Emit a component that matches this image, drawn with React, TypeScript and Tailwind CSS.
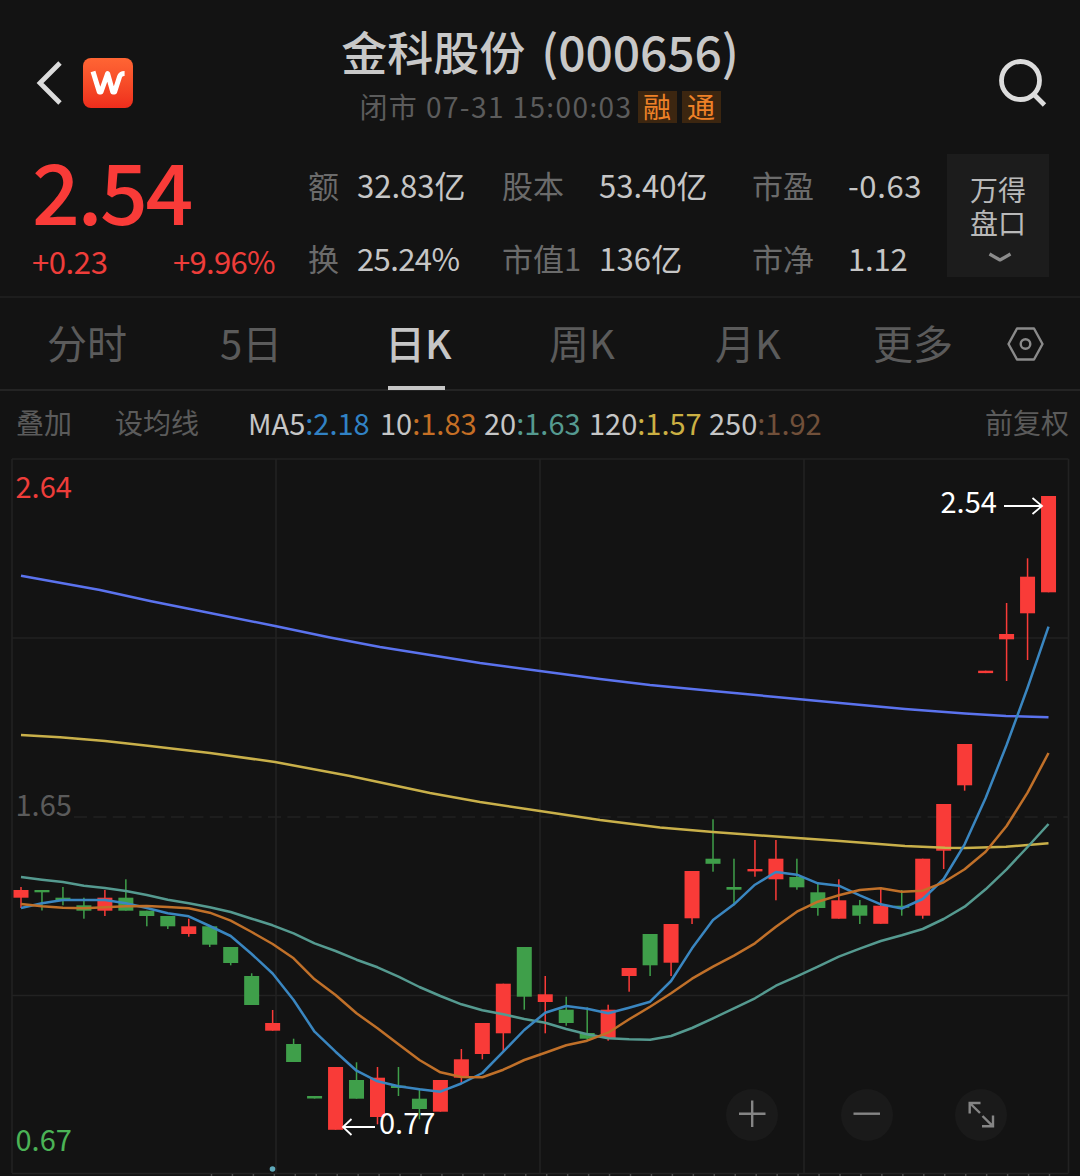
import clsx from "clsx";

type Candle = {
  up: boolean;
  top: number;
  bottom: number;
  high: number;
  low: number;
};

// [direction, body top, body bottom, wick top, wick bottom]
const RAW_CANDLES: [string, number, number, number, number][] = [
  ["r", 890, 897.7, 887, 908],
  ["g", 890, 892.3, 890, 910.5],
  ["g", 897.7, 900, 887, 905.3],
  ["g", 905.3, 910.7, 897.7, 918.7],
  ["r", 897.7, 910.7, 890, 916],
  ["g", 897.7, 910.7, 879.3, 910.7],
  ["g", 910.7, 916, 910.7, 926.3],
  ["g", 916, 926.3, 916, 929],
  ["r", 926.3, 934, 918.7, 936.7],
  ["g", 926.3, 944.7, 925, 947],
  ["g", 947, 963, 947, 965.3],
  ["g", 976, 1005, 973.3, 1005],
  ["r", 1023, 1030.7, 1010, 1030.7],
  ["g", 1044, 1062, 1038.7, 1062],
  ["g", 1096, 1098.5, 1096, 1098.5],
  ["r", 1067, 1129.8, 1067, 1129.8],
  ["g", 1080, 1098.7, 1062.3, 1098.7],
  ["r", 1077.7, 1117, 1067, 1124.3],
  ["g", 1085.7, 1088, 1067, 1096],
  ["g", 1098.7, 1109, 1088, 1119.3],
  ["r", 1080, 1111.7, 1080, 1111.7],
  ["r", 1059.3, 1077.7, 1049, 1082.7],
  ["r", 1023, 1054, 1023, 1059.3],
  ["r", 983.7, 1033.3, 983.7, 1051.7],
  ["g", 947, 996.7, 947, 1009.7],
  ["r", 994.3, 1002, 976, 1033.3],
  ["g", 1009.7, 1023, 996.7, 1025.7],
  ["g", 1033, 1038.7, 1007.3, 1040],
  ["r", 1009.7, 1038, 1004.7, 1040.7],
  ["r", 968, 976, 968, 991.7],
  ["g", 934, 965.3, 934, 976],
  ["r", 924, 962.7, 924, 976],
  ["r", 871, 918.3, 871, 924],
  ["g", 858.7, 863.8, 819.3, 871.7],
  ["g", 887, 889.7, 858.7, 905.3],
  ["r", 869, 871.4, 840, 876.7],
  ["r", 858.7, 879.3, 840, 900.3],
  ["g", 877, 887.3, 858.7, 889.7],
  ["g", 892.3, 908, 882, 915.7],
  ["r", 900.3, 918.7, 879.3, 918.7],
  ["g", 905.3, 915.7, 900, 924],
  ["r", 905.7, 923.8, 887.3, 923.8],
  ["g", 905.7, 907.8, 890, 915.7],
  ["r", 858.7, 915.7, 858.7, 918.7],
  ["r", 804, 850.7, 804, 869],
  ["r", 744, 785.3, 744, 790.7],
  ["r", 670.7, 673.1, 670.7, 673.1],
  ["r", 634, 639.3, 603, 681],
  ["r", 576.7, 613.3, 558.3, 660],
  ["r", 496, 592.3, 496, 592.3],
];

const CANDLES: Candle[] = RAW_CANDLES.map(([dir, top, bottom, high, low]) => ({
  up: dir === "r",
  top,
  bottom,
  high,
  low,
}));

const candleX = (i: number) => 21 + i * 20.97;

const MA5 = [
  908, 903.3, 900, 900, 900, 903.3, 908, 913.3, 916.3, 926, 936, 954, 973.5, 1000, 1031.7, 1051.7, 1070.7,
  1081.3, 1086.3, 1089.3, 1091.7, 1083.5, 1073, 1051.7, 1030, 1012.7, 1006, 1008.7, 1013.3, 1007.7, 1001.7,
  981, 948.3, 920, 904.3, 884.7, 872, 874.7, 883.3, 885.7, 895.3, 904.3, 908.5, 899, 879, 844.3, 798, 745,
  687.7, 626.7,
];
const MA10 = [
  904, 906.3, 907.7, 908.3, 907.3, 906.3, 906, 907, 908.3, 912.7, 920.7, 932, 944, 958.3, 979.3, 995, 1013.3,
  1028.3, 1044.3, 1060, 1072.3, 1077, 1077.3, 1069.7, 1060, 1052.7, 1045.3, 1040.7, 1032.7, 1019.3, 1006.7,
  993.3, 978.7, 966.7, 955.7, 943.3, 926.7, 911.7, 901.7, 895.3, 890, 888.3, 891.7, 890.7, 882.3, 869.3,
  851.7, 826, 792.7, 753,
];
const MA20 = [
  877, 879.7, 882, 885.7, 888, 891, 895, 899.7, 903.3, 907.3, 912, 918.7, 925.3, 933.3, 943.3, 951, 959.7,
  967.3, 976.7, 987, 996, 1004.3, 1010.3, 1014.3, 1019, 1022.7, 1029, 1034.3, 1038.3, 1039.3, 1039.7, 1036,
  1028, 1018.3, 1008.3, 998.3, 985.7, 976.3, 966.7, 956.7, 948.7, 941, 935.3, 929, 919, 906.7, 889.3, 869.3,
  847, 824,
];

const MA120_POINTS =
  "21,735 60,737.3 105,741 150,746 210,753 275,762 350,776 430,793 480,802 540,811 600,820 660,827.5 713,832 776,836.5 840,841 905,846 945,847.7 965,848 1006,846.7 1048.5,843.3";
const MA250_POINTS =
  "21,575.7 100,590 150,601 200,611 275,626 330,637.5 380,647 430,655 480,663 540,671 600,679 650,685 713,691 776,697 840,703 905,709 965,713.5 1006,716 1048.5,717.3";

const toPoints = (ys: number[]) => ys.map((y, i) => `${candleX(i)},${y}`).join(" ");

const STATS = [
  { label: "额", value: "32.83亿", spacing: "" },
  { label: "股本", value: "53.40亿", spacing: "" },
  { label: "市盈", value: "-0.63", spacing: "tracking-[0.6px]" },
  { label: "换", value: "25.24%", spacing: "tracking-[-0.6px]" },
  { label: "市值1", value: "136亿", spacing: "tracking-[0.2px]" },
  { label: "市净", value: "1.12", spacing: "tracking-[-0.2px]" },
];

const TABS = ["分时", "5日", "日K", "周K", "月K", "更多"];

const AVERAGES = [
  { name: "MA5", value: "2.18", color: "text-[#3182c4]", width: "w-[132px]" },
  { name: "10", value: "1.83", color: "text-[#c56f25]", width: "w-[104px]" },
  { name: "20", value: "1.63", color: "text-[#559a90]", width: "w-[105px]" },
  { name: "120", value: "1.57", color: "text-[#cbb043]", width: "w-[120px]" },
  { name: "250", value: "1.92", color: "text-[#71503a]", width: "w-[119px]" },
];

function Logo() {
  return (
    <div className="ml-[20px] flex h-[50px] w-[50px] items-center justify-center rounded-[8px] bg-gradient-to-b from-[#ff6534] to-[#ee2c1c]">
      <svg width="36" height="26" viewBox="0 0 36 26" fill="none" stroke="#fff" strokeWidth="5">
        <path d="M3 1.5 L9.3 22 H11 L17.6 3.5 L22.8 22 H24.6 L29.6 6.4 Q30.6 3.4 34.6 3.4" strokeLinejoin="round" />
      </svg>
    </div>
  );
}

function Header() {
  return (
    <header className="flex h-[140px] justify-between">
      <div className="flex w-[300px] items-center pt-[26px] pl-[36px]">
        <svg width="27" height="44" viewBox="0 0 27 44" fill="none" stroke="#dcdcdc" strokeWidth="4.8">
          <path d="M24 2 L4 22 L24 42" />
        </svg>
        <Logo />
      </div>
      <div className="flex flex-col items-center">
        <h1 className="mt-[20px] flex h-[60px] items-center text-[46px] leading-[60px] font-medium text-[#c8c8c8]">
          金科股份
          <span className="ml-[16px] text-[48px] tracking-[-0.1px]">(000656)</span>
        </h1>
        <div className="mt-[10px] flex h-[34px] items-center text-[28px] leading-[34px] text-[#5c5c5c]">
          <span className="-mt-[3px] tracking-[1.4px]">闭市 07-31 15:00:03</span>
          <span className="ml-[5px] flex h-[32px] w-[39px] items-center justify-center bg-[#3c2610] pb-[3px] text-[#ee8127]">融</span>
          <span className="ml-[5px] flex h-[32px] w-[39px] items-center justify-center bg-[#3c2610] pb-[3px] text-[#ee8127]">通</span>
        </div>
      </div>
      <div className="flex w-[300px] items-center justify-end pt-[26px] pr-[32px]">
        <svg width="50" height="50" viewBox="0 0 50 50" fill="none" stroke="#dcdcdc" strokeWidth="4.8">
          <circle cx="22.5" cy="22.5" r="19" />
          <path d="M35.5 36 L46.5 47" />
        </svg>
      </div>
    </header>
  );
}

function Quote() {
  return (
    <section className="flex h-[158px] border-b-2 border-[#1d1d1d] pl-[32px]">
      <div className="w-[276px] text-[#f93b38]">
        <div className="h-[97px] text-[84px] leading-[98px] font-medium tracking-[-2.4px]">2.54</div>
        <div className="flex h-[48px] text-[31px] leading-[48px] tracking-[-0.4px] text-[#ee3d3a]">
          <span className="w-[141px]">+0.23</span>
          <span className="tracking-[-0.7px]">+9.96%</span>
        </div>
      </div>
      <div className="mt-[8px] grid h-[146px] w-[639px] grid-cols-[49px_145px_97px_153px_96px_99px] grid-rows-2 items-center text-[31px] leading-[40px] whitespace-nowrap">
        {STATS.map((stat) => (
          <div key={stat.label} className="contents">
            <span className="text-[#6b6b6b]">{stat.label}</span>
            <span className={clsx("text-[#c6c6c6]", stat.spacing)}>{stat.value}</span>
          </div>
        ))}
      </div>
      <button className="mt-[14px] flex h-[123px] w-[102px] flex-col items-center bg-[#1c1c1c] pt-[19px] text-[28px] leading-[33px] text-[#b9b9b9]">
        <span>万得</span>
        <span>盘口</span>
        <svg className="mt-[13px] ml-[3px]" width="24" height="12" viewBox="0 0 24 12" fill="none" stroke="#8c8c8c" strokeWidth="3.2">
          <path d="M1.5 2 L12 8 L22.5 2" strokeLinejoin="round" />
        </svg>
      </button>
    </section>
  );
}

function Tabs() {
  return (
    <nav className="grid h-[93px] grid-cols-[173px_166px_163px_166px_158px_133px_1fr] border-b-2 border-[#242424] pl-[47px] text-[40px] leading-[89px]">
      {TABS.map((tab) => {
        const active = tab === "日K";
        return (
          <div key={tab} className={clsx("relative", active ? "font-medium text-[#c6c6c6]" : "text-[#5b5b5b]")}>
            <span className={clsx(active && "-ml-px")}>{tab}</span>
            {active && <span className="absolute top-[88px] left-[2px] h-[4px] w-[57px] bg-[#c6c6c6]" />}
          </div>
        );
      })}
      <div className="flex items-center pl-px">
        <svg width="37" height="34" viewBox="0 0 37 34" fill="none" stroke="#8a8a8a" strokeWidth="2.4">
          <path d="M10 1.5 H27 L35.5 17 L27 32.5 H10 L1.5 17 Z" strokeLinejoin="round" />
          <circle cx="18.5" cy="17" r="4.8" />
        </svg>
      </div>
    </nav>
  );
}

function AverageBar() {
  return (
    <div className="flex h-[59px] items-center justify-between pt-[3px] pr-[11px] pl-[16px] text-[28px] leading-[56px] whitespace-nowrap text-[#5b5b5b]">
      <div className="flex">
        <span className="w-[99px]">叠加</span>
        <span className="w-[133px]">设均线</span>
        <div className="flex text-[29px]">
          {AVERAGES.map((avg) => (
            <span key={avg.name} className={clsx(avg.color, avg.width)}>
              <span className="text-[#c6c6c6]">{avg.name}</span>:{avg.value}
            </span>
          ))}
        </div>
      </div>
      <span>前复权</span>
    </div>
  );
}

function Chart() {
  return (
    <svg className="block" width="1080" height="726" viewBox="0 450 1080 726" fill="none">
      <g stroke="#222222" strokeWidth="1.6">
        {[12, 276, 540, 804, 1068.5].map((x) => (
          <path key={x} d={`M${x} 459 V1173`} />
        ))}
        {[459, 638, 995.5, 1173.5].map((y) => (
          <path key={y} d={`M12 ${y} H1068.5`} />
        ))}
        <path d="M74 817 H1068.5" strokeDasharray="13 6.4" />
      </g>

      {/* volume pane starts right under the frame */}
      <g stroke="#4a4a4a" strokeWidth="1.5">
        {Array.from({ length: 41 }, (_, i) => (
          <path key={i} d={`M${211.5 + i * 20.95} 1174 v2`} />
        ))}
      </g>
      <circle cx="272.5" cy="1169" r="2.8" fill="#5fa9ba" />

      {CANDLES.map((c, i) => {
        const x = candleX(i);
        const color = c.up ? "#f93b38" : "#3f9f4a";
        return (
          <g key={i} fill={color}>
            <rect x={x - 0.75} y={c.high} width="1.5" height={c.low - c.high} />
            <rect x={x - 7.5} y={c.top} width="15" height={c.bottom - c.top} />
          </g>
        );
      })}

      <g strokeWidth="2.5" strokeLinejoin="round">
        <polyline points={MA250_POINTS} stroke="#5b73ee" />
        <polyline points={MA120_POINTS} stroke="#c9b04a" />
        <polyline points={toPoints(MA20)} stroke="#559a90" />
        <polyline points={toPoints(MA5)} stroke="#3a86c0" />
        <polyline points={toPoints(MA10)} stroke="#c07029" />
      </g>

      <g fontSize="29">
        <text x="15.5" y="498" fill="#ee3d3a">2.64</text>
        <text x="15.5" y="815.5" fill="#5b5b5b">1.65</text>
        <text x="15.5" y="1151" fill="#4bb356">0.67</text>
        <text x="940.5" y="512.5" fill="#fff">2.54</text>
        <text x="379" y="1133.5" fill="#fff">0.77</text>
      </g>
      <g stroke="#fff" strokeWidth="1.8">
        <path d="M1004 506 H1042 M1032.5 498 L1042 506 L1032.5 514" />
        <path d="M375 1127 H343 M351.5 1119 L343 1127 L351.5 1135" />
      </g>

      {[752, 867, 981].map((x) => (
        <circle key={x} cx={x} cy="1115" r="26" fill="#1a1a1a" />
      ))}
      <g stroke="#858585" strokeWidth="2.4">
        <path d="M739 1113.7 H765.5 M752.2 1100.5 V1127" />
        <path d="M853.5 1113.7 H880" />
        <path d="M969.7 1113.5 V1103 H980.5 M969.7 1103 L980 1113" />
        <path d="M993 1115.5 V1126.3 H982 M993 1126.3 L982.5 1116" />
      </g>
    </svg>
  );
}

export default function App() {
  return (
    <div className="h-[1176px] w-[1080px] overflow-hidden bg-[#131313] font-['Noto_Sans_CJK_SC',sans-serif]">
      <Header />
      <Quote />
      <Tabs />
      <AverageBar />
      <Chart />
    </div>
  );
}
